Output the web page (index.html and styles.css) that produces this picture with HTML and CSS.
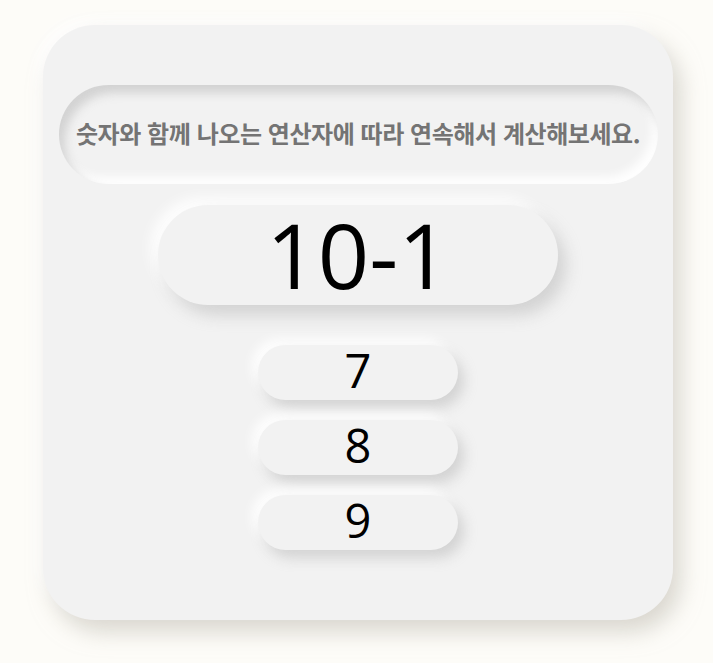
FILE: index.html
```html
<!DOCTYPE html>
<html lang="ko">
<head>
<meta charset="utf-8">
<title>연속 계산</title>
<link rel="stylesheet" href="styles.css">
</head>
<body>
<main class="card">
  <div class="guide">숫자와 함께 나오는 연산자에 따라 연속해서 계산해보세요.</div>
  <div class="display">10-1</div>
  <div class="answers">
    <button class="answer">7</button>
    <button class="answer">8</button>
    <button class="answer">9</button>
  </div>
</main>
</body>
</html>
```
FILE: styles.css
```css
html, body {
  margin: 0;
  padding: 0;
}
body {
  background: #fdfcf8;
  font-family: "Noto Sans CJK KR", "Noto Sans", sans-serif;
  width: 713px;
  height: 663px;
  overflow: hidden;
}
.card {
  box-sizing: border-box;
  width: 630px;
  height: 595px;
  margin: 25px 0 0 43px;
  padding: 60px 15px 0 15px;
  background: #f2f2f2;
  border-radius: 52px;
  box-shadow: 8px 12px 22px rgba(190, 185, 175, 0.55), -6px -6px 14px rgba(255, 255, 255, 0.9);
  display: flex;
  flex-direction: column;
  align-items: center;
}
.guide {
  box-sizing: border-box;
  width: 599px;
  height: 99px;
  border-radius: 50px;
  background: #f2f2f2;
  box-shadow: inset 6px 8px 10px rgba(200, 200, 200, 0.75), inset -6px -7px 10px rgba(255, 255, 255, 0.95);
  display: flex;
  align-items: center;
  justify-content: center;
  color: #747474;
  font-weight: 700;
  font-size: 24px;
  letter-spacing: -0.45px;
  padding-bottom: 4px;
}
.display {
  box-sizing: border-box;
  width: 400px;
  height: 100px;
  margin-top: 21px;
  border-radius: 50px;
  background: #f2f2f2;
  box-shadow: 8px 10px 16px rgba(200, 200, 200, 0.75), -7px -7px 14px rgba(255, 255, 255, 0.95);
  display: flex;
  align-items: center;
  justify-content: center;
  color: #000;
  font-family: "Open Sans", "Noto Sans", sans-serif;
  font-size: 90px;
  font-weight: 400;
  line-height: 1;
  padding-bottom: 2px;
}
.answers {
  margin-top: 40px;
  display: flex;
  flex-direction: column;
  gap: 20px;
}
.answer {
  box-sizing: border-box;
  width: 200px;
  height: 55px;
  border: none;
  border-radius: 28px;
  background: #f2f2f2;
  box-shadow: 6px 8px 13px rgba(200, 200, 200, 0.75), -6px -6px 12px rgba(255, 255, 255, 0.95);
  font-family: "Open Sans", "Noto Sans", sans-serif;
  font-size: 47px;
  line-height: 1;
  color: #000;
  padding: 0 0 5px 0;
  display: flex;
  align-items: center;
  justify-content: center;
}
```
